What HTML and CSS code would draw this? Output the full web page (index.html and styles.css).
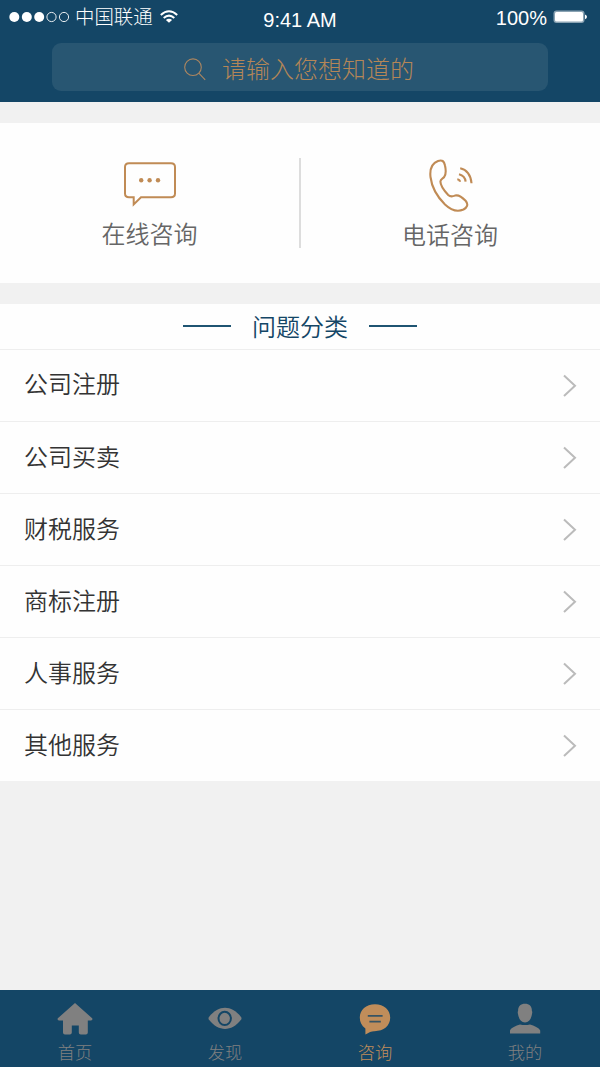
FILE: index.html
```html
<!DOCTYPE html>
<html lang="zh-CN">
<head>
  <meta charset="UTF-8" />
  <meta name="viewport" content="width=device-width, initial-scale=1.0" />
  <title>咨询</title>
  <link rel="stylesheet" href="styles.css">
</head>
<body>

  <header>
    <div class="status-bar">
      <div class="carrier">
        <svg width="62" height="12" viewBox="0 0 62 12">
          <g fill="#fff">
            <circle cx="5.3" cy="6" r="5" />
            <circle cx="17.8" cy="6" r="5" />
            <circle cx="30.2" cy="6" r="5" />
          </g>
          <g fill="none" stroke="#fff" stroke-width="0.9">
            <circle cx="42.5" cy="6" r="4.6" />
            <circle cx="55" cy="6" r="4.6" />
          </g>
        </svg>
        <span>中国联通</span>
        <svg class="wifi" width="18" height="13" viewBox="0 0 18 13">
          <g fill="none" stroke="#fff" stroke-width="2">
            <path d="M0.8 4.9 Q9 -2.3 17.2 4.9" />
            <path d="M3.7 7.9 Q9 3.3 14.3 7.9" />
          </g>
          <path d="M5.9 10 Q9 7.4 12.1 10 L9 12.8 Z" fill="#fff" />
        </svg>
      </div>
      <div class="clock">9:41 AM</div>
      <div class="battery">
        <span>100%</span>
        <svg width="34" height="14" viewBox="0 0 34 14">
          <rect x="0.5" y="0.5" width="31" height="12.6" rx="3" fill="#fff" fill-opacity="0.5" />
          <rect x="2" y="2" width="28" height="9.6" rx="1.5" fill="#fff" />
          <path d="M32 4.4 Q34 5 34 6.8 Q34 8.6 32 9.2 Z" fill="#fff" />
        </svg>
      </div>
    </div>
    <div class="search">
      <svg width="22" height="23" viewBox="0 0 22 23" fill="none" stroke="#ad8660" stroke-width="1.1">
        <circle cx="9" cy="9.2" r="8.3" />
        <path d="M14.8 15.2 L21.2 21.8" />
      </svg>
      <span>请输入您想知道的</span>
    </div>
  </header>

  <section class="contact">
    <a class="contact-item">
      <svg width="52" height="46" viewBox="0 0 52 46" fill="none" stroke="#c08b55" stroke-width="2">
        <path d="M5 2.3 H47 Q51 2.3 51 6 V32.5 Q51 36.2 47 36.2 H17 L9.7 43.4 V36.2 H5 Q1 36.2 1 32.5 V6 Q1 2.3 5 2.3 Z" />
        <g fill="#c08b55" stroke="none">
          <circle cx="17.2" cy="19.2" r="2.2" />
          <circle cx="25.6" cy="19.2" r="2.2" />
          <circle cx="34" cy="19.2" r="2.2" />
        </g>
      </svg>
      <span>在线咨询</span>
    </a>
    <a class="contact-item phone">
      <svg width="46" height="54" viewBox="0 0 46 54" fill="none" stroke="#c08b55" stroke-width="2.1">
        <path d="M9 2 C13 0.5 15.2 2 16 6.5 C17 11 17 15.5 15.2 18 C13.8 19.6 11.4 19.8 11.4 22.5 C11.4 26 15.5 32 19.2 36 C21.6 38.2 23.5 37.6 26 36.6 C29.5 35.4 33 38 36.6 41.8 C39.8 45.6 38 48.6 34.5 50.5 C29 53 22 51.2 16 45.5 C8.5 38 2.7 28 1.5 18 C0.6 10 2.5 4.5 9 2 Z" />
        <path d="M31.2 9.2 C37.5 10.3 42 16 42.5 24.2" />
        <path d="M30 15.2 C33.8 16.2 36.3 19 36.6 22.6" />
        <path d="M28.3 20.3 C30.2 20.6 30.9 21.4 31 22.8" />
      </svg>
      <span>电话咨询</span>
    </a>
  </section>

  <section class="category">
    <h2><span>问题分类</span></h2>
    <ul>
      <li class="first"><span>公司注册</span><svg width="14" height="24" viewBox="0 0 14 24"><path d="M1 1.5 L12 11.8 L1 22.1" /></svg></li>
      <li><span>公司买卖</span><svg width="14" height="24" viewBox="0 0 14 24"><path d="M1 1.5 L12 11.8 L1 22.1" /></svg></li>
      <li><span>财税服务</span><svg width="14" height="24" viewBox="0 0 14 24"><path d="M1 1.5 L12 11.8 L1 22.1" /></svg></li>
      <li><span>商标注册</span><svg width="14" height="24" viewBox="0 0 14 24"><path d="M1 1.5 L12 11.8 L1 22.1" /></svg></li>
      <li><span>人事服务</span><svg width="14" height="24" viewBox="0 0 14 24"><path d="M1 1.5 L12 11.8 L1 22.1" /></svg></li>
      <li><span>其他服务</span><svg width="14" height="24" viewBox="0 0 14 24"><path d="M1 1.5 L12 11.8 L1 22.1" /></svg></li>
    </ul>
  </section>

  <nav>
    <a>
      <svg width="36" height="34" viewBox="0 0 36 34" fill="currentColor">
        <path d="M18 1 L35.2 16.3 Q36 18.4 34 18.4 H30.8 V30.6 Q30.8 32.6 28.8 32.6 H23.8 Q21.8 32.6 21.8 30.6 V23.6 H14.8 V30.6 Q14.8 32.6 12.8 32.6 H8 Q6 32.6 6 30.6 V18.4 H2 Q0 18.4 0.8 16.3 Z" />
      </svg>
      <span>首页</span>
    </a>
    <a>
      <svg width="34" height="34" viewBox="0 0 34 34">
        <path d="M0.8 15.2 C6 8.6 11.5 5.8 17 5.8 C22.5 5.8 28 8.6 33.2 15.2 Q33.8 16.4 33.2 17.6 C28 24.2 22.5 27 17 27 C11.5 27 6 24.2 0.8 17.6 Q0.2 16.4 0.8 15.2 Z" fill="currentColor" />
        <ellipse cx="16.7" cy="16.4" rx="6.2" ry="6.6" fill="currentColor" stroke="#144666" stroke-width="2" />
      </svg>
      <span>发现</span>
    </a>
    <a class="active">
      <svg width="32" height="34" viewBox="0 0 32 34">
        <path d="M16 2.2 C25 2.2 31.2 7.6 31.2 15.6 C31.2 24 24.5 29.4 15 29.2 Q11.5 29.2 6.4 32.6 V26.4 C2.5 23.8 0.8 20 0.8 15.6 C0.8 7.6 7 2.2 16 2.2 Z" fill="currentColor" />
        <path d="M8.8 13.8 H23.6 M10.4 19.6 H21.8" stroke="#144666" stroke-opacity="0.8" stroke-width="1.8" />
      </svg>
      <span>咨询</span>
    </a>
    <a>
      <svg width="32" height="34" viewBox="0 0 32 34" fill="currentColor">
        <path d="M16 1.8 C20.4 1.8 23 4.4 22.9 9 Q23.6 9.8 23 12 Q21.6 20.4 16 20.4 Q10.4 20.4 9 12 Q8.4 9.8 9.1 9 C9 4.4 11.6 1.8 16 1.8 Z" />
        <path d="M1 31.6 V28.4 C2 25.4 7 23.8 11 22.4 Q16 23.6 21 22.4 C25 23.8 30 25.4 31.2 28.4 V31.6 Z" />
      </svg>
      <span>我的</span>
    </a>
  </nav>

</body>
</html>
```

FILE: styles.css
```css
* {
  box-sizing: border-box;
}

body {
  margin: 0;
  height: 1067px;
  display: flex;
  flex-direction: column;
  background: #f1f1f1;
  color: #333;
  font-family: "Noto Sans CJK SC", sans-serif;
  font-weight: 300;
  font-size: 24px;
}

svg {
  display: block;
}

header {
  height: 102px;
  background: #144666;
  color: #fff;
}

.status-bar {
  display: grid;
  grid-template-columns: 1fr auto 1fr;
  height: 43px;
  padding: 0 13px 0 9px;
  line-height: 34px;
}

.carrier, .battery {
  display: flex;
  align-items: center;
  height: 33px;
}

.carrier span {
  margin: -2px 7px 0 4px;
  font-size: 19.4px;
}

.clock {
  padding: 3px 0 0 4px;
  font: 20px/34px "Liberation Sans", sans-serif;
}

.battery {
  justify-content: flex-end;
  gap: 6px;
  font-family: "Liberation Sans", sans-serif;
  font-size: 20px;
}

.battery span {
  padding-top: 2px;
}

.search {
  display: flex;
  align-items: center;
  justify-content: center;
  gap: 16px;
  width: 496px;
  height: 48px;
  margin: 0 auto;
  padding: 4px 2px 0 0;
  border-radius: 9px;
  background: #285672;
  color: #b58657;
}

.search span {
  margin-top: -4px;
}

.contact {
  display: flex;
  height: 160px;
  margin-top: 21px;
  background: #fefefe;
}

.contact-item {
  width: 300px;
  display: flex;
  flex-direction: column;
  align-items: center;
  padding: 38px 1px 0 0;
  color: #666;
  position: relative;
}

.contact-item span {
  margin-top: 8px;
  line-height: 36px;
  font-weight: 350;
}

.contact-item.phone {
  padding: 36px 0 0;
}

.contact-item.phone svg {
  margin-left: 3px;
}

.contact-item.phone span {
  margin-top: 3px;
}

.contact-item.phone::before {
  content: "";
  position: absolute;
  left: -1px;
  top: 35px;
  width: 2px;
  height: 90px;
  background: #ddd;
}

.category {
  margin-top: 21px;
  background: #fefefe;
}

.category h2 {
  display: flex;
  align-items: center;
  justify-content: center;
  gap: 21px;
  height: 46px;
  margin: 0;
  border-bottom: 1px solid #eee;
  color: #144666;
  font-size: 24px;
  font-weight: 350;
}

.category h2 span {
  padding-bottom: 2px;
}

.category h2::before,
.category h2::after {
  content: "";
  width: 48px;
  height: 2px;
  margin-bottom: 1px;
  background: #1f5472;
}

.category ul {
  margin: 0;
  padding: 0;
  list-style: none;
}

.category li {
  display: flex;
  align-items: center;
  justify-content: space-between;
  height: 72px;
  padding: 0 23px 0 24px;
  border-bottom: 1px solid #eee;
  font-weight: 350;
}

.category li span {
  padding-bottom: 4px;
}

.category li.first span {
  padding-bottom: 6px;
}

.category li:last-child {
  height: 71px;
  border-bottom: none;
}

.category li path {
  fill: none;
  stroke: #bbb;
  stroke-width: 2;
}

nav {
  display: flex;
  height: 77px;
  margin-top: auto;
  background: #144666;
  color: #808080;
}

nav a {
  flex: 1;
  display: flex;
  flex-direction: column;
  align-items: center;
  padding-top: 12px;
  font-size: 17.3px;
}

nav span {
  margin-top: 3px;
  line-height: 25px;
}

nav .active {
  color: #c08d5a;
}
```
